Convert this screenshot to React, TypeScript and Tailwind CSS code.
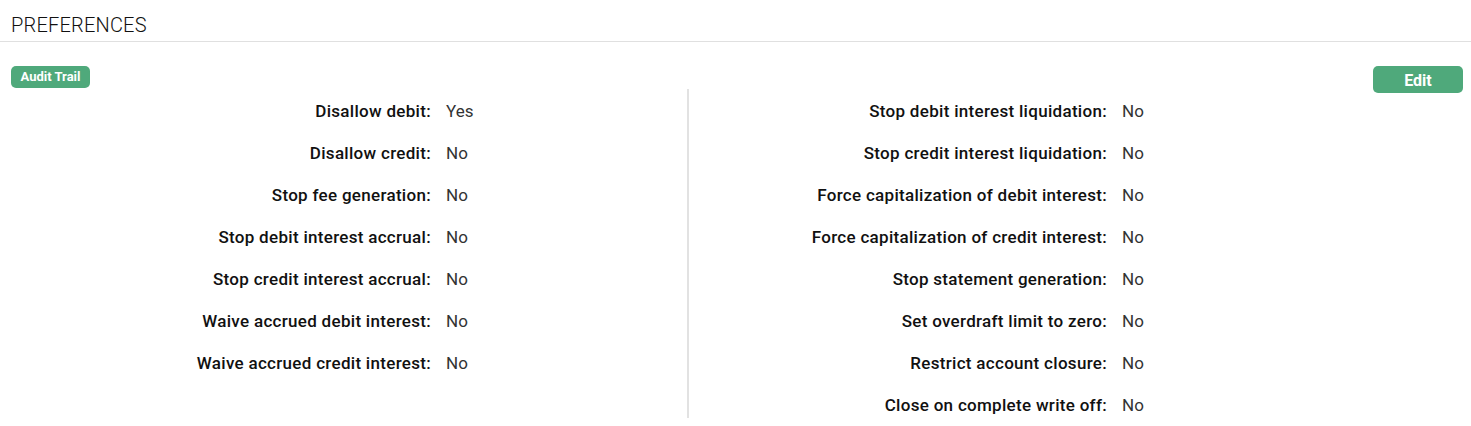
const left = [
  ["Disallow debit:", "Yes"],
  ["Disallow credit:", "No"],
  ["Stop fee generation:", "No"],
  ["Stop debit interest accrual:", "No"],
  ["Stop credit interest accrual:", "No"],
  ["Waive accrued debit interest:", "No"],
  ["Waive accrued credit interest:", "No"],
];

const right = [
  ["Stop debit interest liquidation:", "No"],
  ["Stop credit interest liquidation:", "No"],
  ["Force capitalization of debit interest:", "No"],
  ["Force capitalization of credit interest:", "No"],
  ["Stop statement generation:", "No"],
  ["Set overdraft limit to zero:", "No"],
  ["Restrict account closure:", "No"],
  ["Close on complete write off:", "No"],
];

function Row({ label, value, labelWidth }: { label: string; value: string; labelWidth: string }) {
  return (
    <div className="flex h-[42px] items-center pt-[4px]">
      <div className={`${labelWidth} shrink-0 text-right font-medium tracking-[0.3px] text-[#111]`}>{label}</div>
      <div className="pl-[15px] text-[#333]">{value}</div>
    </div>
  );
}

export default function App() {
  return (
    <div className="h-[426px] w-[1471px] bg-white font-['Roboto',sans-serif] text-[17px]">
      <div className="flex h-[42px] items-center border-b border-[#e0e0e0] px-[11px] pt-[8px]">
        <h2 className="text-[20px] font-light text-[#111] tracking-[0.2px]">PREFERENCES</h2>
      </div>

      <div className="flex items-start justify-between pt-[24px] pl-[11px] pr-[8px]">
        <button className="h-[22px] w-[79px] rounded-[5px] bg-[#4fa97b] text-[13px] font-bold text-white">
          Audit Trail
        </button>
        <button className="h-[27px] w-[90px] rounded-[5px] bg-[#4fa97b] pt-[2px] text-[16px] font-bold text-white">
          Edit
        </button>
      </div>

      <div className="-mt-[4px] flex">
        <div className="w-[687px]">
          {left.map(([l, v]) => (
            <Row key={l} label={l} value={v} labelWidth="w-[431px]" />
          ))}
        </div>
        <div className="h-[329px] w-[2px] bg-[#e2e2e2]" />
        <div className="flex-1">
          {right.map(([l, v]) => (
            <Row key={l} label={l} value={v} labelWidth="w-[418px]" />
          ))}
        </div>
      </div>
    </div>
  );
}
